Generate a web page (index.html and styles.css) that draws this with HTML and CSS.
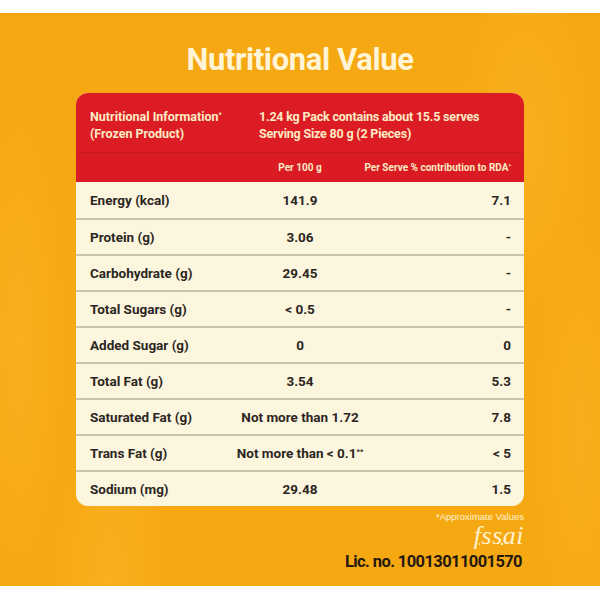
FILE: index.html
```html
<!DOCTYPE html>
<html lang="en">
<head>
<meta charset="utf-8">
<title>Nutritional Value</title>
<link rel="stylesheet" href="styles.css">
</head>
<body>
<main class="page">
  <h1 class="title">Nutritional Value</h1>
  <section class="card">
    <div class="row head">
      <div class="cell">Nutritional Information<sup>*</sup><br>(Frozen Product)</div>
      <div class="cell span">1.24 kg Pack contains about 15.5 serves<br>Serving Size 80 g (2 Pieces)</div>
    </div>
    <div class="row sub">
      <div class="cell"></div>
      <div class="cell mid">Per 100 g</div>
      <div class="cell right">Per Serve % contribution to RDA<sup>*</sup></div>
    </div>
    <div class="row data first"><div class="cell">Energy (kcal)</div><div class="cell mid">141.9</div><div class="cell right">7.1</div></div>
    <div class="row data"><div class="cell">Protein (g)</div><div class="cell mid">3.06</div><div class="cell right">-</div></div>
    <div class="row data"><div class="cell">Carbohydrate (g)</div><div class="cell mid">29.45</div><div class="cell right">-</div></div>
    <div class="row data"><div class="cell">Total Sugars (g)</div><div class="cell mid">&lt; 0.5</div><div class="cell right">-</div></div>
    <div class="row data"><div class="cell">Added Sugar (g)</div><div class="cell mid">0</div><div class="cell right">0</div></div>
    <div class="row data"><div class="cell">Total Fat (g)</div><div class="cell mid">3.54</div><div class="cell right">5.3</div></div>
    <div class="row data"><div class="cell">Saturated Fat (g)</div><div class="cell mid">Not more than 1.72</div><div class="cell right">7.8</div></div>
    <div class="row data"><div class="cell">Trans Fat (g)</div><div class="cell mid">Not more than &lt; 0.1<sup>**</sup></div><div class="cell right">&lt; 5</div></div>
    <div class="row data"><div class="cell">Sodium (mg)</div><div class="cell mid">29.48</div><div class="cell right">1.5</div></div>
  </section>
  <footer class="foot">
    <p class="approx">*Approximate Values</p>
    <p class="fssai">fssai</p>
    <p class="lic">Lic. no. 10013011001570</p>
  </footer>
</main>
</body>
</html>
```
FILE: styles.css
```css
html, body {
  margin: 0;
  padding: 0;
  background: #ffffff;
}
body {
  font-family: Roboto, "Liberation Sans", sans-serif;
}
.page {
  margin-top: 13px;
  height: 573px;
  box-sizing: border-box;
  padding-top: 27px;
  display: flex;
  flex-direction: column;
  align-items: center;
  background:
    radial-gradient(ellipse 50px 240px at 18px 330px, rgba(255,196,60,0.3), rgba(255,196,60,0) 100%),
    radial-gradient(ellipse 60px 180px at 110px 570px, rgba(255,196,60,0.3), rgba(255,196,60,0) 100%),
    radial-gradient(ellipse 70px 180px at 525px 130px, rgba(255,200,70,0.25), rgba(255,200,70,0) 100%),
    radial-gradient(ellipse 50px 220px at 580px 420px, rgba(255,196,60,0.25), rgba(255,196,60,0) 100%),
    #f6a812;
}
.title {
  margin: 0;
  font-size: 31px;
  line-height: 40px;
  font-weight: 700;
  color: #fff4d6;
  letter-spacing: -0.4px;
}
.card {
  margin-top: 13px;
  width: 448px;
  border-radius: 12px;
  overflow: hidden;
  background: #fdf6de;
}
.row {
  display: grid;
  grid-template-columns: 150px 120px minmax(0, 1fr);
  padding: 0 13px 0 14px;
  box-sizing: border-box;
}
.head {
  height: 59px;
  padding-top: 15px;
  background: #dc1c24;
  color: #fdebc6;
  font-size: 12.5px;
  line-height: 17px;
  font-weight: 700;
  white-space: nowrap;
}
.head .span {
  grid-column: 2 / 4;
  padding-left: 19px;
  letter-spacing: -0.2px;
}
sup {
  font-size: 0.55em;
  line-height: 0;
  vertical-align: 0.6em;
}
.sub {
  height: 30px;
  align-items: center;
  background: #da1b23;
  border-top: 1px solid #c8171e;
  color: #fdebc6;
  font-size: 10px;
  font-weight: 700;
}
.data {
  height: 36px;
  align-items: center;
  border-top: 2px solid #cbc4ad;
  color: #2b2622;
  font-size: 13.5px;
  font-weight: 700;
}
.data.first {
  border-top: 0;
}
.mid {
  justify-self: center;
  white-space: nowrap;
}
.right {
  justify-self: end;
  text-align: right;
  white-space: nowrap;
}
.foot {
  width: 448px;
  display: flex;
  flex-direction: column;
  align-items: flex-end;
}
.approx {
  margin: 5px 0 0;
  font-family: "Liberation Sans", sans-serif;
  font-size: 9.5px;
  line-height: 11px;
  color: #fff1cf;
}
.fssai {
  margin: 2px 0 0;
  font-family: "Liberation Serif", serif;
  font-style: italic;
  font-size: 26px;
  line-height: 24px;
  color: #fff1cf;
  text-decoration: underline;
  text-decoration-thickness: 1.5px;
  text-underline-offset: -1px;
  letter-spacing: 0.5px;
}
.lic {
  margin: 3px 2px 0 0;
  font-size: 16.5px;
  line-height: 22px;
  font-weight: 700;
  color: #24180f;
  white-space: nowrap;
  letter-spacing: -0.6px;
}
```
